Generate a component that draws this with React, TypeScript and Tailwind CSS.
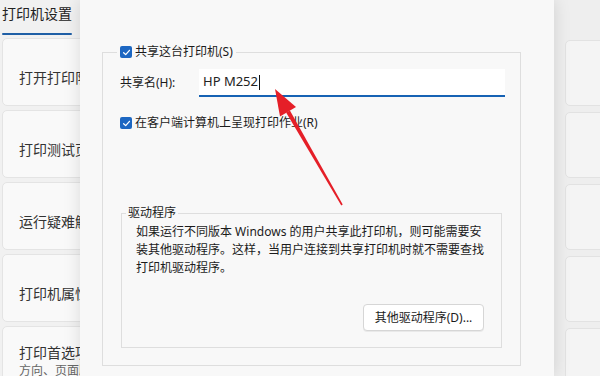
import React from "react";

const font = "font-['Noto_Sans','Noto_Sans_CJK_SC',sans-serif]";

function Check() {
    return (
        <span className="flex h-[12px] w-[12px] items-center justify-center rounded-[2px] bg-[#1d67c2]">
            <svg width="9" height="9" viewBox="0 0 10 10" fill="none">
                <path d="M1.8 5.2 L4.1 7.4 L8.3 2.6" stroke="white" strokeWidth="1.4" strokeLinecap="round" strokeLinejoin="round"/>
            </svg>
        </span>
    );
}

const navItems = ["打开打印队列", "打印测试页", "运行疑难解答", "打印机属性"];

export default function App() {
    return (
        <div className={`relative flex h-[376px] w-[600px] overflow-hidden bg-[#f1f1f1] text-[#1b1b1b] ${font}`}>
            {/* background page, left column */}
            <div className="w-[80px] shrink-0 overflow-hidden">
                <div className="w-[200px] pl-[2px]">
                    <div className="h-[38px] pt-[4px]">
                        <div className="text-[14px] leading-[20px] text-[#222]">打印机设置</div>
                        <div className="mt-[9px] h-[2px] w-[70px] rounded-full bg-[#1f5fa6]"></div>
                    </div>
                    <div className="flex flex-col gap-[4px]">
                        {navItems.map((t) => (
                            <div key={t} className="flex h-[68px] items-center rounded-[5px] border border-[#e4e4e4] bg-[#f9f9f9] pl-[16px] pt-[10px] text-[14px] text-[#333]">
                                {t}
                            </div>
                        ))}
                        <div className="h-[68px] rounded-[5px] border border-[#e4e4e4] bg-[#f9f9f9] pl-[16px] pt-[16px]">
                            <div className="text-[14px] leading-[20px] text-[#333]">打印首选项</div>
                            <div className="text-[12px] leading-[16px] text-[#666]">方向、页面顺序</div>
                        </div>
                    </div>
                </div>
            </div>

            {/* dialog */}
            <div className="relative z-10 w-[474px] shrink-0 bg-[#f8f8f8] pl-[22px] pt-[44px] shadow-[0_0_16px_rgba(0,0,0,0.13)]">
                <fieldset className="h-[322px] w-[419px] border border-[#dedede] pl-[17px] pr-[15px]">
                    <legend className="ml-[-3px] flex items-center gap-[3px] px-[3px] text-[12px] leading-[16px]">
                        <Check/>
                        <span>共享这台打印机(S)</span>
                    </legend>
                    <div className="mt-[9px] flex items-center">
                        <span className="w-[79px] text-[12px] leading-[16px]">共享名(H):</span>
                        <div className="flex h-[28px] w-[306px] items-center border-b-2 border-[#1662b4] bg-white pl-[4px]">
                            <span className="text-[13px] text-[#222]">HP M252</span>
                            <span className="ml-[1px] h-[15px] w-[1px] bg-[#111]"></span>
                        </div>
                    </div>
                    <div className="mt-[18px] flex items-center gap-[3px] text-[12px] leading-[16px]">
                        <Check/>
                        <span>在客户端计算机上呈现打印作业(R)</span>
                    </div>
                    <fieldset className="ml-[1px] mt-[74px] w-[380px] border border-[#dedede] pb-[16px] pl-[14px] pr-[17px]">
                        <legend className="ml-[-10px] px-[2px] text-[12px] leading-[16px]">驱动程序</legend>
                        <div className="mt-[2px] text-[12px] leading-[18px] whitespace-nowrap">
                            <div>如果运行不同版本 Windows 的用户共享此打印机，则可能需要安</div>
                            <div>装其他驱动程序。这样，当用户连接到共享打印机时就不需要查找</div>
                            <div>打印机驱动程序。</div>
                        </div>
                        <div className="mt-[27px] flex justify-end">
                            <button className="h-[27px] w-[121px] rounded-[4px] border border-[#d6d6d6] bg-white text-[12px] text-[#1b1b1b] shadow-[0_1px_0_rgba(0,0,0,0.06)]">
                                其他驱动程序(D)...
                            </button>
                        </div>
                    </fieldset>
                </fieldset>
            </div>

            {/* background page, right column */}
            <div className="flex-1 overflow-hidden bg-[#eeeeee] pl-[11px] pt-[40px]">
                <div className="flex w-[80px] flex-col gap-[6px]">
                    <div className="h-[66px] rounded-[5px] border border-[#e2e2e2] bg-[#f4f4f4]"></div>
                    <div className="h-[66px] rounded-[5px] border border-[#e2e2e2] bg-[#f4f4f4]"></div>
                    <div className="h-[66px] rounded-[5px] border border-[#e2e2e2] bg-[#f4f4f4]"></div>
                    <div className="h-[66px] rounded-[5px] border border-[#e2e2e2] bg-[#f4f4f4]"></div>
                    <div className="h-[66px] rounded-[5px] border border-[#e2e2e2] bg-[#f4f4f4]"></div>
                </div>
            </div>

            {/* red annotation arrow */}
            <svg className="pointer-events-none absolute inset-0 z-20" width="600" height="376" viewBox="0 0 600 376">
                <polygon points="289.9,110.4 286.1,112.6 341.3,205.4 342.7,204.6" fill="#e51f28"/>
                <polygon points="275,89 296,107 280,116.5" fill="#e51f28"/>
            </svg>
        </div>
    );
}
